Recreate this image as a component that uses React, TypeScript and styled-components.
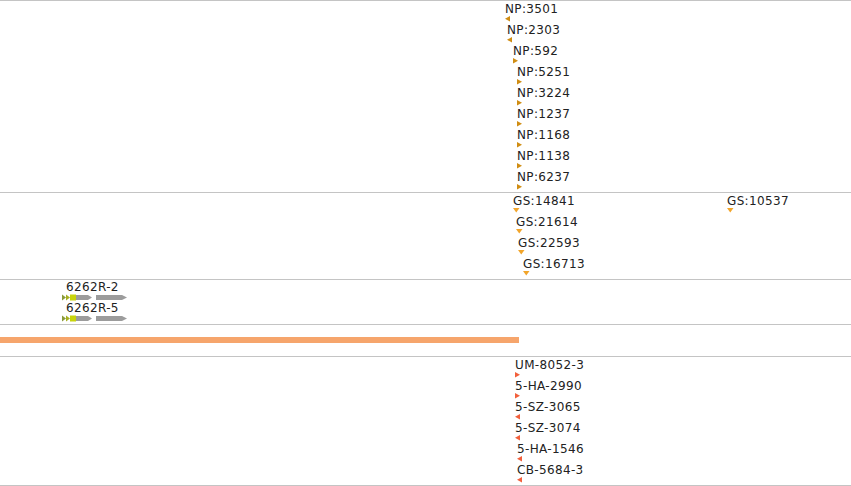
import React from 'react'
import styled, { createGlobalStyle } from 'styled-components'

const GlobalStyle = createGlobalStyle`
    html, body {
        margin: 0;
        padding: 0;
        background: #ffffff;
        overflow: hidden;
    }
    body {
        font-family: "DejaVu Sans", "Liberation Sans", sans-serif;
    }
`

type Dir = 'left' | 'right' | 'down'

interface Feature {
    label: string
    x: number
    dir: Dir
    dx?: number
}

const NP_COLOR = '#d08d13'
const GS_COLOR = '#f2a52a'
const SNP_COLOR = '#f2603c'

const npRows: Feature[][] = [
    [{ label: 'NP:3501', x: 505, dir: 'left', dx: 0 }],
    [{ label: 'NP:2303', x: 507, dir: 'left' }],
    [{ label: 'NP:592', x: 513, dir: 'right' }],
    [{ label: 'NP:5251', x: 517, dir: 'right' }],
    [{ label: 'NP:3224', x: 517, dir: 'right' }],
    [{ label: 'NP:1237', x: 517, dir: 'right' }],
    [{ label: 'NP:1168', x: 517, dir: 'right' }],
    [{ label: 'NP:1138', x: 517, dir: 'right' }],
    [{ label: 'NP:6237', x: 517, dir: 'right' }],
]

const gsRows: Feature[][] = [
    [
        { label: 'GS:14841', x: 513, dir: 'down' },
        { label: 'GS:10537', x: 727, dir: 'down' },
    ],
    [{ label: 'GS:21614', x: 516, dir: 'down' }],
    [{ label: 'GS:22593', x: 518, dir: 'down' }],
    [{ label: 'GS:16713', x: 523, dir: 'down' }],
]

const snpRows: Feature[][] = [
    [{ label: 'UM-8052-3', x: 515, dir: 'right' }],
    [{ label: '5-HA-2990', x: 515, dir: 'right' }],
    [{ label: '5-SZ-3065', x: 515, dir: 'left' }],
    [{ label: '5-SZ-3074', x: 515, dir: 'left' }],
    [{ label: '5-HA-1546', x: 517, dir: 'left' }],
    [{ label: 'CB-5684-3', x: 517, dir: 'left' }],
]

const genes = [
    { label: '6262R-2', x: 62 },
    { label: '6262R-5', x: 62 },
]

const Browser = styled.div`
    display: flex;
    flex-direction: column;
    width: 851px;
    height: 486px;
    border-bottom: 1px solid #c4c4c4;
    box-sizing: border-box;
`

const Track = styled.section<{ $height: number }>`
    position: relative;
    display: flex;
    flex-direction: column;
    height: ${props => props.$height}px;
    border-top: 1px solid #c4c4c4;
    box-sizing: border-box;
    flex-shrink: 0;
`

const Row = styled.div`
    position: relative;
    height: 21px;
    flex-shrink: 0;
`

const FeatureBox = styled.div<{ $x: number }>`
    position: absolute;
    top: 2px;
    left: ${props => props.$x}px;
    display: flex;
    flex-direction: column;
    align-items: flex-start;
`

const Label = styled.span`
    font-size: 12px;
    line-height: 12px;
    letter-spacing: 0.35px;
    color: #222222;
    white-space: nowrap;
`

const Marker = styled.svg<{ $dx: number }>`
    display: block;
    margin-top: 1px;
    margin-left: ${props => props.$dx}px;
`

const GeneGlyph = styled.svg`
    display: block;
    margin-top: 1px;
`

const GeneBox = styled(FeatureBox)`
    top: 1px;
`

const GeneLabel = styled(Label)`
    margin-left: 4px;
`

const RangeBar = styled.div`
    margin-top: 12px;
    width: 519px;
    height: 6px;
    background: #f6a56c;
`

const Triangle = ({ dir, color, dx }: { dir: Dir, color: string, dx: number }): JSX.Element => {
    if (dir === 'down') {
        return (
            <Marker $dx={dx} width="7" height="5" viewBox="0 0 7 5">
                <polygon points="0,0 6.5,0 3.25,4.5" fill={color} />
            </Marker>
        )
    }
    const points = dir === 'right' ? '0,0 5,2.75 0,5.5' : '5,0 0,2.75 5,5.5'
    return (
        <Marker $dx={dx} width="5" height="6" viewBox="0 0 5 6">
            <polygon points={points} fill={color} />
        </Marker>
    )
}

const FeatureRows = ({ rows, color }: { rows: Feature[][], color: string }): JSX.Element => (
    <>
        {rows.map((row, i) => (
            <Row key={i}>
                {row.map(f => (
                    <FeatureBox key={f.label} $x={f.x}>
                        <Label>{f.label}</Label>
                        <Triangle dir={f.dir} color={color} dx={f.dx ?? 0} />
                    </FeatureBox>
                ))}
            </Row>
        ))}
    </>
)

const Gene = (): JSX.Element => (
    <GeneGlyph width="66" height="7" viewBox="0 0 66 7">
        <polygon points="0,0.5 4,3.5 0,6.5" fill="#8a9a3a" />
        <polygon points="4,0.5 8,3.5 4,6.5" fill="#a6b020" />
        <rect x="8" y="0.5" width="6" height="6" fill="#c8d40c" />
        <polygon points="14,1 26,1 30,3.5 26,6 14,6" fill="#9c9c9c" />
        <polygon points="34,1 60,1 65,3.5 60,6 34,6" fill="#9c9c9c" />
    </GeneGlyph>
)

const App = (): JSX.Element => {
    return (
        <>
            <GlobalStyle />
            <Browser>
                <Track $height={192}>
                    <FeatureRows rows={npRows} color={NP_COLOR} />
                </Track>
                <Track $height={87}>
                    <FeatureRows rows={gsRows} color={GS_COLOR} />
                </Track>
                <Track $height={45}>
                    {genes.map(g => (
                        <Row key={g.label}>
                            <GeneBox $x={g.x}>
                                <GeneLabel>{g.label}</GeneLabel>
                                <Gene />
                            </GeneBox>
                        </Row>
                    ))}
                </Track>
                <Track $height={32}>
                    <RangeBar />
                </Track>
                <Track $height={129}>
                    <FeatureRows rows={snpRows} color={SNP_COLOR} />
                </Track>
            </Browser>
        </>
    )
}

export default App
